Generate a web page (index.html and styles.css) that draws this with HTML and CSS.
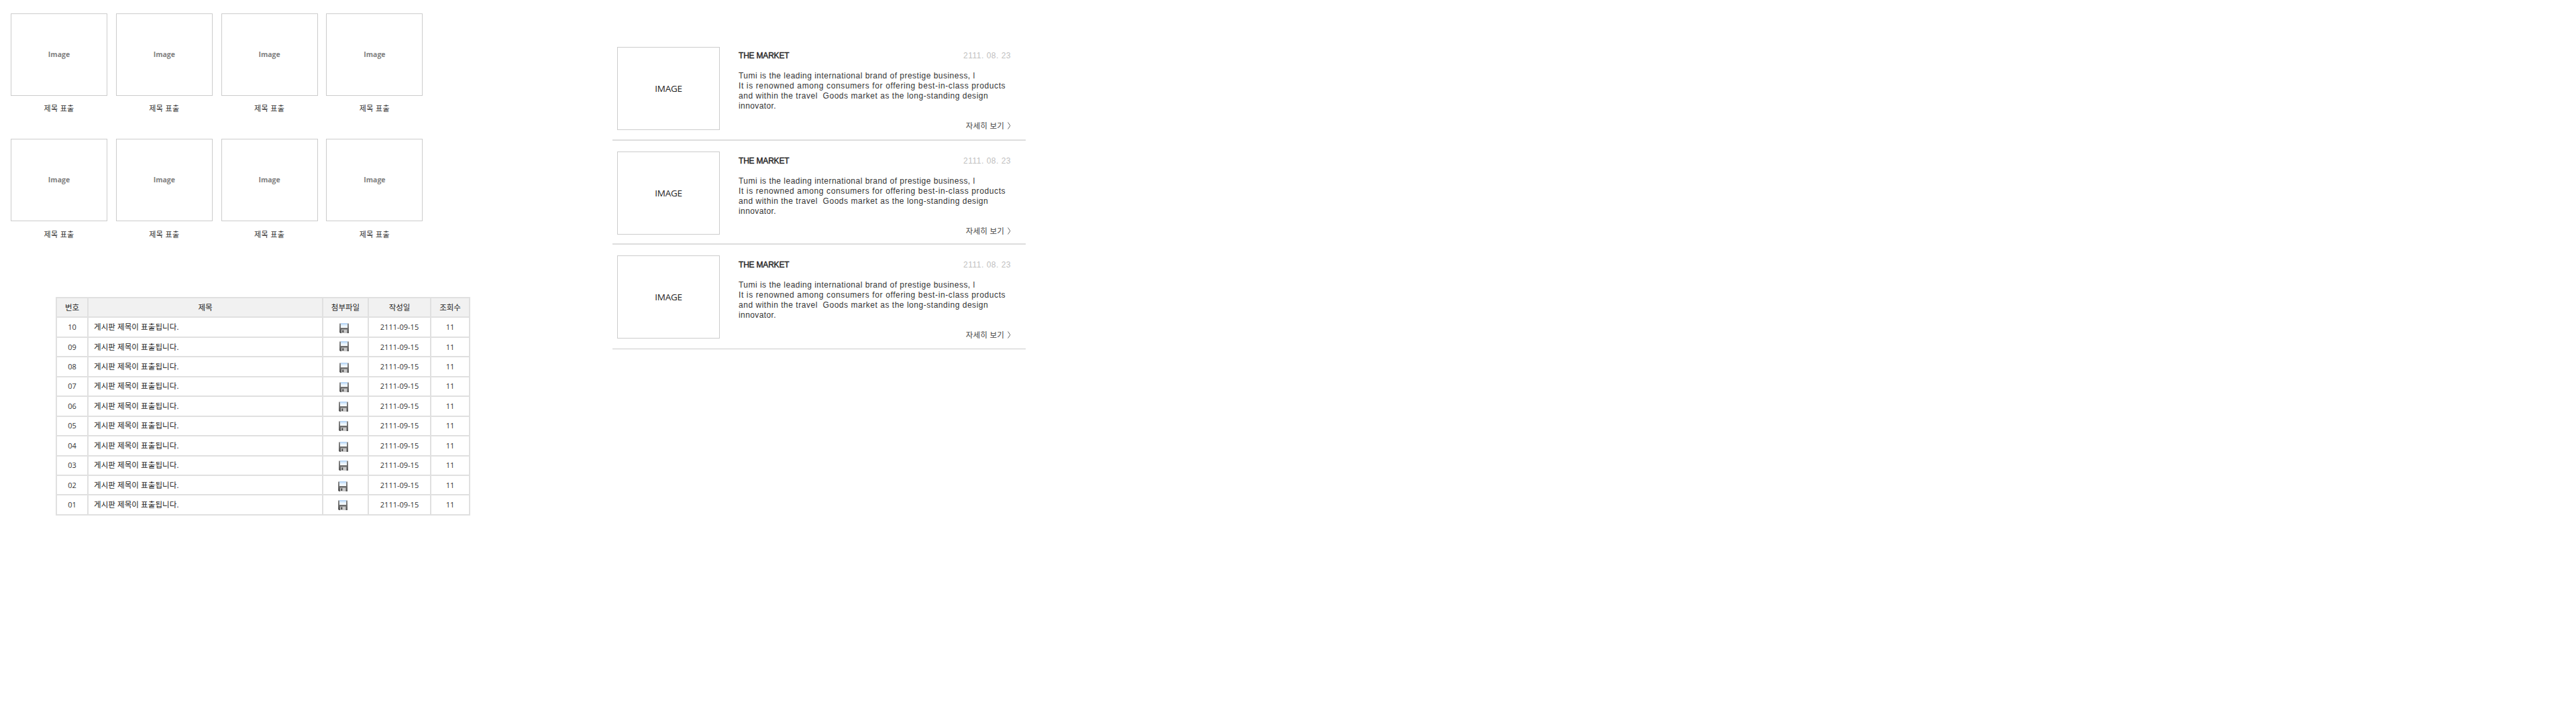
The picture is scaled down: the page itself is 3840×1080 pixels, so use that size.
FILE: index.html
```html
<!DOCTYPE html>
<html lang="ko">
<head>
<meta charset="utf-8">
<title>게시판</title>
<link rel="stylesheet" href="styles.css">
</head>
<body>
<svg class="defs" width="0" height="0" aria-hidden="true">
  <defs>
    <linearGradient id="body" x1="0" y1="0" x2="0" y2="1"><stop offset="0" stop-color="#8a8a8a"/><stop offset="1" stop-color="#555"/></linearGradient>
    <linearGradient id="label" x1="0" y1="0" x2="0" y2="1"><stop offset="0" stop-color="#a9cdf2"/><stop offset="0.5" stop-color="#e4f1fd"/><stop offset="1" stop-color="#fff"/></linearGradient>
    <symbol id="disk" viewBox="0 0 14 15">
      <path d="M0 .5h14V15H1.2L0 13.8z" fill="url(#body)"/>
      <path d="M2 0h10v7H2z" fill="url(#label)"/>
      <path d="M3 9.5h8.500V15H3z" fill="#c9c9c9"/>
      <path d="M4.300 10.500h2V14h-2z" fill="#484848"/>
    </symbol>
  </defs>
</svg>
<main class="page">
  <div class="left">
    <section class="gallery">
      <figure><div class="thumb">Image</div><figcaption>제목 표출</figcaption></figure>
      <figure><div class="thumb">Image</div><figcaption>제목 표출</figcaption></figure>
      <figure><div class="thumb">Image</div><figcaption>제목 표출</figcaption></figure>
      <figure><div class="thumb">Image</div><figcaption>제목 표출</figcaption></figure>
      <figure><div class="thumb">Image</div><figcaption>제목 표출</figcaption></figure>
      <figure><div class="thumb">Image</div><figcaption>제목 표출</figcaption></figure>
      <figure><div class="thumb">Image</div><figcaption>제목 표출</figcaption></figure>
      <figure><div class="thumb">Image</div><figcaption>제목 표출</figcaption></figure>
    </section>
    <table class="board">
      <colgroup><col class="c-no"><col class="c-title"><col class="c-file"><col class="c-date"><col class="c-hits"></colgroup>
      <thead><tr><th>번호</th><th>제목</th><th>첨부파일</th><th>작성일</th><th>조회수</th></tr></thead>
      <tbody>
        <tr><td>10</td><td class="subject">게시판 제목이 표출됩니다.</td><td class="file"><svg class="disk r1"><use href="#disk"/></svg></td><td>2111-09-15</td><td>11</td></tr>
        <tr><td>09</td><td class="subject">게시판 제목이 표출됩니다.</td><td class="file"><svg class="disk r2"><use href="#disk"/></svg></td><td>2111-09-15</td><td>11</td></tr>
        <tr><td>08</td><td class="subject">게시판 제목이 표출됩니다.</td><td class="file"><svg class="disk r3"><use href="#disk"/></svg></td><td>2111-09-15</td><td>11</td></tr>
        <tr><td>07</td><td class="subject">게시판 제목이 표출됩니다.</td><td class="file"><svg class="disk r4"><use href="#disk"/></svg></td><td>2111-09-15</td><td>11</td></tr>
        <tr><td>06</td><td class="subject">게시판 제목이 표출됩니다.</td><td class="file"><svg class="disk r5"><use href="#disk"/></svg></td><td>2111-09-15</td><td>11</td></tr>
        <tr><td>05</td><td class="subject">게시판 제목이 표출됩니다.</td><td class="file"><svg class="disk r6"><use href="#disk"/></svg></td><td>2111-09-15</td><td>11</td></tr>
        <tr><td>04</td><td class="subject">게시판 제목이 표출됩니다.</td><td class="file"><svg class="disk r7"><use href="#disk"/></svg></td><td>2111-09-15</td><td>11</td></tr>
        <tr><td>03</td><td class="subject">게시판 제목이 표출됩니다.</td><td class="file"><svg class="disk r8"><use href="#disk"/></svg></td><td>2111-09-15</td><td>11</td></tr>
        <tr><td>02</td><td class="subject">게시판 제목이 표출됩니다.</td><td class="file"><svg class="disk r9"><use href="#disk"/></svg></td><td>2111-09-15</td><td>11</td></tr>
        <tr><td>01</td><td class="subject">게시판 제목이 표출됩니다.</td><td class="file"><svg class="disk r10"><use href="#disk"/></svg></td><td>2111-09-15</td><td>11</td></tr>
      </tbody>
    </table>
  </div>
  <section class="news">
    <article class="item">
      <div class="photo">IMAGE</div>
      <div class="content">
        <header><h2>THE MARKET</h2><time>2111. 08. 23</time></header>
        <p><span>Tumi is the leading international brand of prestige business, l</span><span>It is renowned among consumers for offering best-in-class products</span><span>and within the travel  Goods market as the long-standing design</span><span>innovator.</span></p>
        <a class="more">자세히 보기<svg viewBox="0 0 5 11"><path d="M.5.5 3.800 5.500.5 10.500"/></svg></a>
      </div>
    </article>
    <article class="item">
      <div class="photo">IMAGE</div>
      <div class="content">
        <header><h2>THE MARKET</h2><time>2111. 08. 23</time></header>
        <p><span>Tumi is the leading international brand of prestige business, l</span><span>It is renowned among consumers for offering best-in-class products</span><span>and within the travel  Goods market as the long-standing design</span><span>innovator.</span></p>
        <a class="more">자세히 보기<svg viewBox="0 0 5 11"><path d="M.5.5 3.800 5.500.5 10.500"/></svg></a>
      </div>
    </article>
    <article class="item last">
      <div class="photo">IMAGE</div>
      <div class="content">
        <header><h2>THE MARKET</h2><time>2111. 08. 23</time></header>
        <p><span>Tumi is the leading international brand of prestige business, l</span><span>It is renowned among consumers for offering best-in-class products</span><span>and within the travel  Goods market as the long-standing design</span><span>innovator.</span></p>
        <a class="more">자세히 보기<svg viewBox="0 0 5 11"><path d="M.5.5 3.800 5.500.5 10.500"/></svg></a>
      </div>
    </article>
  </section>
</main>
</body>
</html>
```
FILE: styles.css
```css
* { box-sizing: border-box; }
body { margin: 0; background: #fff; color: #333; font: 12px/15px "Liberation Sans", "Noto Sans CJK KR", sans-serif; }
.defs { display: block; height: 0; }
.page { display: flex; align-items: flex-start; }
.left { width: 913px; flex: none; }

.gallery { display: grid; grid-template-columns: repeat(4, 144px); grid-auto-rows: 187px; column-gap: 12.800px; padding: 20px 0 0 16px; height: 423px; }
.gallery figure { margin: 0; }
.thumb { height: 123px; border: 1px solid #ccc; display: flex; align-items: center; justify-content: center; font: 700 10.500px/15px "Open Sans", sans-serif; color: #808080; }
.gallery figcaption { margin-top: 10px; text-align: center; font: 11px/16px "Noto Sans CJK KR", sans-serif; letter-spacing: .3px; color: #333; }
.gallery figure:nth-child(n+5) figcaption { margin-top: 11px; }

.board { margin: 20px 0 0 83px; width: 617px; table-layout: fixed; border-collapse: collapse; font: 11px/16px "Open Sans", "Noto Sans CJK KR", sans-serif; text-align: center; color: #333; }
.board tr { height: 29.450px; }
.board th, .board td { border: 2px solid #e0e0e0; padding: 0; font-weight: 400; }
.board th { background: #f1f1f1; color: #222; font-size: 11.500px; }
.c-no { width: 47px; }
.c-title { width: 350px; }
.c-file { width: 68px; }
.c-date { width: 93px; }
.c-hits { width: 58px; }
.board .subject { text-align: left; padding-left: 8px; color: #222; font-size: 11.500px; letter-spacing: .080px; }
.board .file { vertical-align: top; text-align: left; line-height: 0; }
.disk { width: 14px; height: 15px; margin-left: 24px; }
.r1 { margin-top: 8px; }
.r2 { margin-top: 5px; }
.r3 { margin-top: 8px; }
.r4 { margin-top: 7px; }
.r5 { margin-top: 7px; }
.r6 { margin-top: 6px; }
.r7 { margin-top: 8px; }
.r8 { margin-top: 6px; }
.r9 { margin-top: 8px; }
.r10 { margin-top: 7px; }
.r5, .r6, .r7, .r8 { margin-left: 23px; }
.r9, .r10 { margin-left: 22px; }

.news { width: 616px; padding-top: 54px; }
.item { display: flex; height: 155.500px; padding: 16px 22px 0 7px; border-bottom: 2px solid #ddd; }
.item.last { height: 156px; border-bottom: 1px solid #ccc; }
.photo { width: 153px; height: 124px; flex: none; border: 1px solid #ccc; display: flex; align-items: center; justify-content: center; font: 13.500px/16px "Open Sans", sans-serif; letter-spacing: -.3px; color: #222; }
.content { flex: 1; margin-left: 28px; display: flex; flex-direction: column; padding-top: 6px; }
.item + .item .content { padding-top: 7px; }
.content header { display: flex; justify-content: space-between; }
.content h2 { margin: 0; font-size: 12px; font-weight: 400; line-height: 15px; letter-spacing: -.2px; -webkit-text-stroke: .4px #222; color: #222; }
.content time { color: #c0c0c0; letter-spacing: .5px; }
.content p { margin: 15px 0 0; color: #333; }
.content p span { display: block; white-space: pre; letter-spacing: .480px; }
.content p span:nth-child(2) { letter-spacing: .620px; }
.content p span:nth-child(3) { letter-spacing: .530px; }
.content p span:nth-child(4) { letter-spacing: .400px; }
.more { align-self: flex-end; margin-top: 14px; display: flex; align-items: center; gap: 5px; font: 11.500px/15px "Noto Sans CJK KR", sans-serif; letter-spacing: .2px; color: #444; }
.more svg { width: 5px; height: 11px; fill: none; stroke: #666; stroke-width: 1; }
```
